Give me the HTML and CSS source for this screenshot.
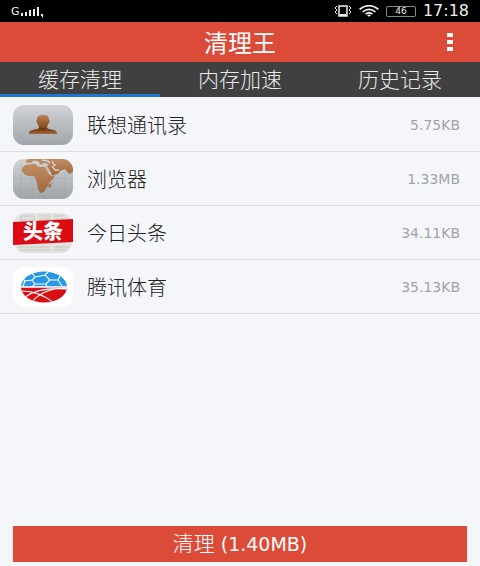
FILE: index.html
```html
<!DOCTYPE html>
<html lang="zh-CN">
<head>
<meta charset="utf-8">
<meta name="viewport" content="width=device-width, initial-scale=1">
<title>清理王</title>
<link rel="stylesheet" href="styles.css">
</head>
<body>
<div class="status">
  <div class="signal">
    <span class="network">G</span>
    <svg width="24" height="14" viewBox="0 0 24 14" fill="#eee" aria-hidden="true">
      <path d="M1 9h2v3H1zM5 8h2v4H5zM9 6h2v6H9zM13 5h2v7h-2zM17 3h2v9h-2zM21 10h2v3l-1 1v-2h-1z"/>
    </svg>
  </div>
  <div class="indicators">
    <svg width="18" height="12" viewBox="0 0 18 12" fill="none" stroke="#eee" aria-hidden="true">
      <path d="M5 1h8v10H5z" stroke-width="1.5"/><path d="M6 10h6" stroke-width="2"/>
      <path d="M3 1L1 3l2 2-2 2 2 2M15 1l2 2-2 2 2 2-2 2"/>
    </svg>
    <svg width="20" height="12" viewBox="0 0 20 12" fill="none" stroke="#eee" stroke-width="1.7" aria-hidden="true">
      <path d="M.6 4.2Q10-2.8 19.4 4.2M3.6 6.8Q10 1.8 16.4 6.8M6.600 9.100Q10 6.400 13.400 9.100"/>
      <path d="M8 10.2q2-1.4 4 0l-2 1.6z" fill="#eee" stroke="none"/>
    </svg>
    <span class="battery">46</span>
    <time class="clock">17:18</time>
  </div>
</div>
<header class="appbar">
  <h1 class="title">清理王</h1>
  <button class="more" type="button" aria-label="更多">
    <svg width="6" height="20" viewBox="0 0 6 20" fill="#fff" aria-hidden="true"><path d="M0 1h6v4H0zM0 8h6v4H0zM0 15h6v4H0z"/></svg>
  </button>
</header>
<nav class="tabs">
  <button class="tab active" type="button">缓存清理</button>
  <button class="tab" type="button">内存加速</button>
  <button class="tab" type="button">历史记录</button>
</nav>
<main class="content">
  <ul class="list">
    <li class="row">
      <svg class="icon" viewBox="0 0 60 40" aria-hidden="true">
        <defs>
          <linearGradient id="silver" x2="0" y2="1"><stop stop-color="#d2d4d6"/><stop offset="1" stop-color="#9fa5aa"/></linearGradient>
          <linearGradient id="bronze" x2="0" y2="1"><stop stop-color="#bd8256"/><stop offset=".62" stop-color="#895020"/><stop offset=".72" stop-color="#68370d"/><stop offset="1" stop-color="#a96a3b"/></linearGradient>
        </defs>
        <rect width="60" height="40" rx="11" fill="url(#silver)"/>
        <path d="M30 10c4 0 6 1 6 5 1 0 1 3-1 4 0 2-1 2-1 4 2 2 10 1 10 5v1H16v-1c0-4 8-3 10-5 0-2-1-2-1-4-2-1-2-4-1-4 0-4 2-5 6-5z" fill="url(#bronze)"/>
      </svg>
      <span class="name">联想通讯录</span><span class="size">5.75KB</span>
    </li>
    <li class="row">
      <svg class="icon" viewBox="0 0 60 40" aria-hidden="true">
        <defs>
          <clipPath id="tile"><rect width="60" height="40" rx="11"/></clipPath>
          <linearGradient id="land" x2="0" y2="1"><stop stop-color="#c28d64"/><stop offset="1" stop-color="#a0683d"/></linearGradient>
        </defs>
        <g clip-path="url(#tile)">
          <path fill="url(#silver)" d="M0 0h60v40H0z"/>
          <path d="M8 0v40M19 0v40M30 0v40M41 0v40M52 0v40M0 19h60M0 31h60" stroke="#8c9298" stroke-width=".5" opacity=".5"/>
          <g fill="url(#land)">
            <path d="M12 6l7-1 4 0 1 2 4 1 4 0 3 6 3 3 4-1-2 4-4 4 0 3-3 2-2 4-4 1-2-4-1-5-1-4-2-4-5 0-4-1-3-4 0-3zM36 26l3-3-1 5-2 1z"/>
            <path d="M12 3l3-3h45v13l-4 2-4-5-5 2-2 3-6 1-3-3-3-5 3-3-6-1-2 2-3-4-5 1-4 1z"/>
          </g>
          <path d="M19 3l3-1 3 3M29 1l6 1 2 2M39 2l2 4 2 0M34 8l4 7M39 7l3 4 4 0" fill="none" stroke="#d2d4d5" stroke-width="1.300"/>
        </g>
      </svg>
      <span class="name">浏览器</span><span class="size">1.33MB</span>
    </li>
    <li class="row">
      <svg class="icon" viewBox="0 0 60 40" aria-hidden="true">
        <rect x="1" width="58" height="40" rx="11" fill="#e2e2df"/>
        <path d="M8 3h13v4H8zM26 3h12M26 6h12M41 3h10M41 6h12M5 34h32M7 37h30M40 34h16M40 37h13" fill="none" stroke="#c6c6c3" stroke-width="1"/>
        <path d="M0 9l60-3v23L0 32z" fill="#dc0b15"/>
        <text x="30" y="26" text-anchor="middle" class="headline">头条</text>
      </svg>
      <span class="name">今日头条</span><span class="size">34.11KB</span>
    </li>
    <li class="row">
      <svg class="icon" viewBox="0 0 60 40" aria-hidden="true">
        <defs><clipPath id="ball"><ellipse cx="31" cy="20" rx="23" ry="15.500"/></clipPath></defs>
        <rect width="60" height="40" rx="11" fill="#fff"/>
        <g clip-path="url(#ball)">
          <path fill="#2897e5" d="M7 4h48v16H7z"/><path fill="#d90f15" d="M7 20h48v17H7z"/>
          <g fill="none" stroke="#fff" stroke-width="1.100">
            <path d="M7 20h48" stroke-width="1.400"/>
            <path d="M22 10l10-2 5 5-4 4-11 0-3-4zM22 10l-3-4M32 8l4-4M37 13l8 0 3-6M45 13l4 6M33 17l1 3M22 17l-3 3M19 13l-7 1-3-3M12 14l-2 5"/>
            <path d="M12 30Q26 20 54 22M19 35Q30 21 54 21M9 24Q26 24 41 36"/>
          </g>
        </g>
      </svg>
      <span class="name">腾讯体育</span><span class="size">35.13KB</span>
    </li>
  </ul>
</main>
<footer class="actions">
  <button class="clean" type="button">清理<span class="total"> (1.40MB)</span></button>
</footer>
</body>
</html>
```
FILE: styles.css
```css
* {
  box-sizing: border-box;
}

body {
  display: flex;
  flex-direction: column;
  min-height: 100vh;
  margin: 0;
  background: #f4f6fa;
  color: #222;
  font-family: "DejaVu Sans", "Noto Sans CJK SC", sans-serif;
}

button {
  padding: 0;
  border: 0;
  background: none;
  color: inherit;
  font: inherit;
}

.status {
  display: flex;
  justify-content: space-between;
  align-items: center;
  height: 22px;
  padding: 0 11px;
  background: #000;
  color: #eee;
}

.signal,
.indicators {
  display: flex;
  align-items: center;
}

.network {
  font-size: 11px;
}

.indicators {
  gap: 7px;
}

.battery {
  width: 30px;
  border: 1px solid #888;
  border-radius: 2px;
  font-size: 9px;
  line-height: 9px;
  text-align: center;
}

.clock {
  font-size: 16px;
  line-height: 22px;
}

.appbar {
  display: grid;
  grid-template-columns: 1fr auto 1fr;
  align-items: center;
  height: 40px;
  padding: 0 20px;
  background: #dc4b38;
  color: #fff;
}

.title {
  grid-column: 2;
  margin: 0;
  font-family: "Noto Sans CJK SC", sans-serif;
  font-size: 24px;
  font-weight: 400;
  line-height: 40px;
}

.more {
  display: flex;
  justify-self: end;
  padding: 0 7px;
}

.tabs {
  display: grid;
  grid-template-columns: repeat(3, 1fr);
  height: 35px;
  background: #404040;
}

.tab {
  border-bottom: 3px solid transparent;
  color: #e8e8e8;
  font-family: "Noto Sans CJK SC", sans-serif;
  font-size: 21px;
  font-weight: 300;
  line-height: 32px;
}

.tab.active {
  border-color: #1c78d8;
}

.content {
  flex: 1;
}

.list {
  margin: 0;
  padding: 1px 0 0;
  list-style: none;
}

.row {
  display: flex;
  align-items: center;
  gap: 14px;
  height: 54px;
  padding: 0 20px 0 13px;
  border-bottom: 1px solid #dcdee2;
}

.icon {
  width: 60px;
  height: 40px;
}

.headline {
  fill: #fff;
  font-family: "Noto Sans CJK SC", sans-serif;
  font-size: 20px;
  font-weight: 900;
}

.name {
  flex: 1;
  font-family: "Noto Sans CJK SC", sans-serif;
  font-size: 20px;
  font-weight: 300;
  line-height: 28px;
}

.size {
  color: #a2a3a6;
  font-size: 14px;
}

.actions {
  padding: 0 13px 4px;
}

.clean {
  width: 100%;
  height: 36px;
  background: #dc4b38;
  color: #fff;
  font-family: "DejaVu Sans", "Noto Sans CJK SC", sans-serif;
  font-size: 21px;
  font-weight: 300;
  line-height: 36px;
}

.total {
  font-size: 19px;
  font-weight: 400;
}
```
